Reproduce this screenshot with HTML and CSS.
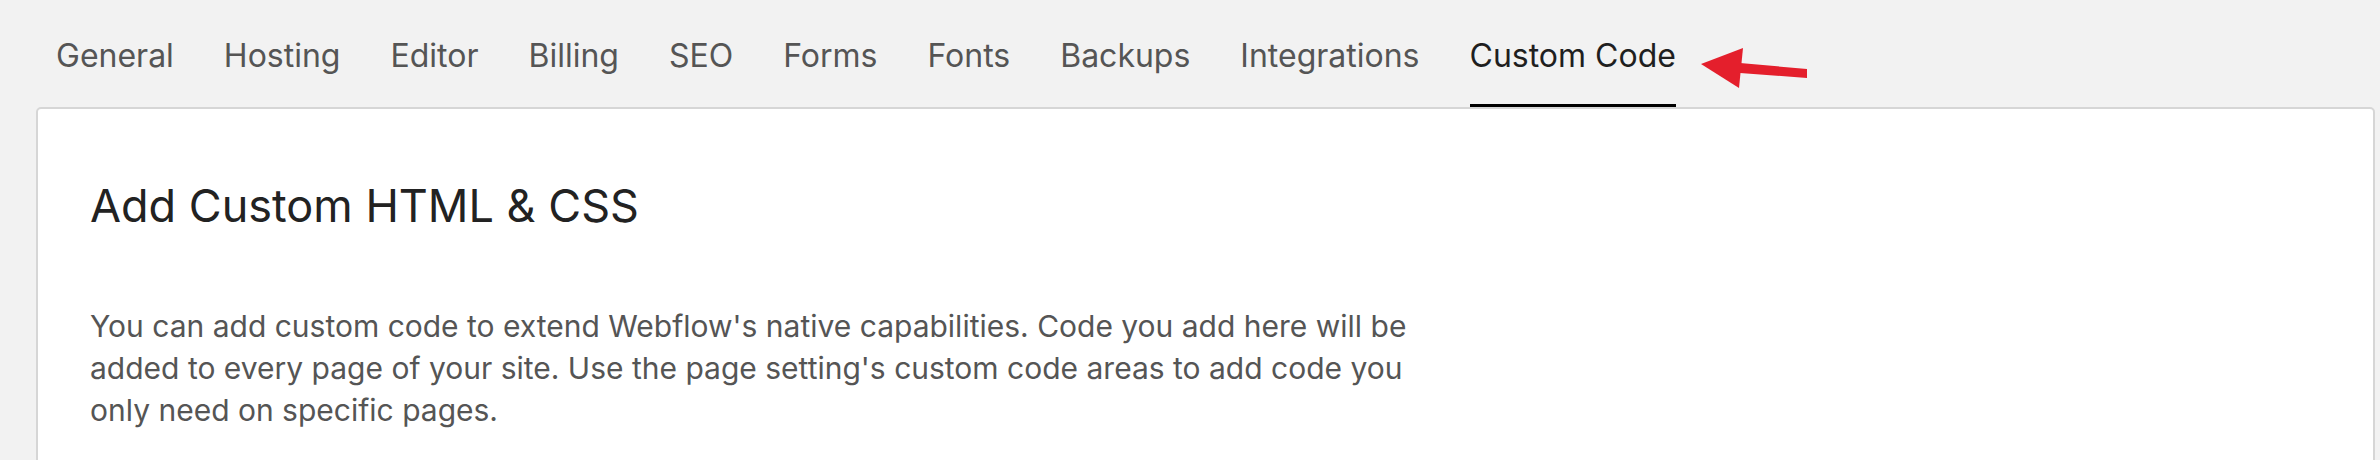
FILE: index.html
```html
<!DOCTYPE html>
<html>
<head>
  <title>Site Settings - Custom Code</title>
  <meta name="viewport" content="width=device-width, initial-scale=1.0">
  <link rel="stylesheet" href="styles.css">
</head>
<body>
  <div class="page">
    <nav class="tabs">
      <a class="tab">General</a>
      <a class="tab">Hosting</a>
      <a class="tab">Editor</a>
      <a class="tab">Billing</a>
      <a class="tab">SEO</a>
      <a class="tab">Forms</a>
      <a class="tab">Fonts</a>
      <a class="tab">Backups</a>
      <a class="tab">Integrations</a>
      <a class="tab active">Custom Code</a>
      <svg class="pointer" width="110" height="44" viewBox="0 0 110 44">
        <polygon points="1,20 43,4 39,44" fill="#e41f2c"/>
        <polygon points="40,19 107,25 107,34 40,29" fill="#e41f2c"/>
      </svg>
    </nav>

    <div class="card">
      <h1>Add Custom HTML &amp; CSS</h1>
      <p class="intro">You can add custom code to extend Webflow's native capabilities. Code you add here will be added to every page of your site. Use the page setting's custom code areas to add code you only need on specific pages.</p>
    </div>
  </div>
</body>
</html>
```

FILE: styles.css
```css
body {
  font-family: 'Inter', 'Liberation Sans', sans-serif;
  background: #f2f2f2;
  margin: 0;
  padding: 0;
}

.page {
  padding: 0 5px 0 36px;
}

.tabs {
  position: relative;
  display: flex;
  gap: 50px;
  padding-left: 20px;
}

.tab {
  display: block;
  padding: 36px 0 28px;
  font-size: 32px;
  line-height: 40px;
  color: #555;
  border-bottom: 3px solid transparent;
  cursor: pointer;
}

.tab.active {
  color: #1f1f1f;
  border-bottom-color: #000;
}

/* annotation arrow pointing at the active tab */
.pointer {
  position: absolute;
  left: 1664px;
  top: 44px;
}

.card {
  background: #fff;
  border: 2px solid #d6d6d6;
  border-radius: 5px;
  padding: 69px 52px 60px;
  min-height: 400px;
}

h1 {
  margin: 0;
  font-size: 45px;
  line-height: 55px;
  font-weight: 400;
  color: #222;
}

.intro {
  margin: 72px 0 0;
  max-width: 1345px;
  font-size: 30px;
  line-height: 42px;
  color: #555;
}
```
